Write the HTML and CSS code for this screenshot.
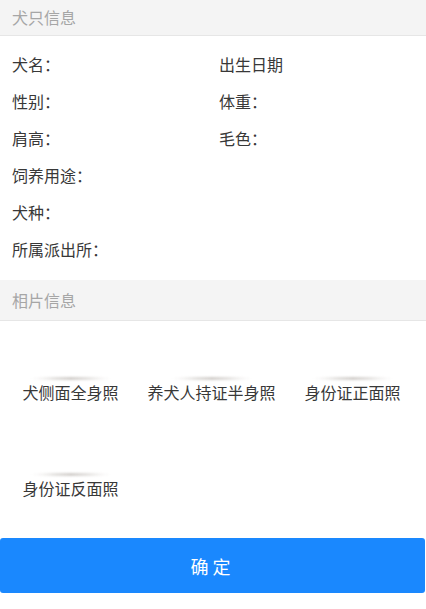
FILE: index.html
```html
<!DOCTYPE html>
<html lang="zh-CN">
<head>
<meta charset="utf-8">
<title>犬只信息</title>
<link rel="stylesheet" href="styles.css">
</head>
<body>
<div class="page">
  <div class="sec-head sec-head-first">犬只信息</div>
  <div class="info">
    <div class="row"><span class="label">犬名：</span></div>
    <div class="row"><span class="label">出生日期</span></div>
    <div class="row"><span class="label">性别：</span></div>
    <div class="row"><span class="label">体重：</span></div>
    <div class="row"><span class="label">肩高：</span></div>
    <div class="row"><span class="label">毛色：</span></div>
    <div class="row full"><span class="label">饲养用途：</span></div>
    <div class="row full"><span class="label">犬种：</span></div>
    <div class="row full"><span class="label">所属派出所：</span></div>
  </div>
  <div class="sec-head">相片信息</div>
  <div class="photos">
    <div class="photo"><div class="pic"></div><div class="cap">犬侧面全身照</div></div>
    <div class="photo"><div class="pic"></div><div class="cap">养犬人持证半身照</div></div>
    <div class="photo"><div class="pic"></div><div class="cap">身份证正面照</div></div>
    <div class="photo"><div class="pic"></div><div class="cap">身份证反面照</div></div>
  </div>
  <div class="btn-wrap">
    <button class="btn" type="button">确定</button>
  </div>
</div>
</body>
</html>
```

FILE: styles.css
```css
* { box-sizing: border-box; }
html, body { margin: 0; padding: 0; background: #fff; }
body {
  font-family: "Noto Sans CJK SC", "Noto Sans", sans-serif;
  color: #333;
  width: 426px;
}
.page { width: 426px; }
.sec-head {
  height: 41px;
  line-height: 41px;
  padding-left: 12px;
  font-size: 16px;
  color: #a6a6a6;
  background: #f4f4f4;
  border-bottom: 1px solid #e6e6e6;
}
.sec-head-first {
  height: 36px;
  line-height: 35px;
}
.info {
  display: grid;
  grid-template-columns: 207px 1fr;
  padding: 10px 0 12px 12px;
}
.row {
  height: 37px;
  line-height: 37px;
  font-size: 16px;
  color: #383838;
}
.row.full { grid-column: 1 / span 2; }
.label { display: inline-block; white-space: nowrap; }
.photos {
  display: grid;
  grid-template-columns: repeat(3, 1fr);
  row-gap: 13px;
  padding: 0 3px 0 0;
}
.photo {
  display: flex;
  flex-direction: column;
  align-items: center;
}
.pic {
  width: 90px;
  height: 59px;
  position: relative;
}
.pic::after {
  content: "";
  position: absolute;
  left: 4px;
  right: 4px;
  bottom: 0;
  height: 3px;
  border-radius: 50%;
  background: linear-gradient(90deg, rgba(200,200,200,0), rgba(190,185,180,0.7), rgba(200,200,200,0));
  filter: blur(1px);
}
.cap {
  height: 24px;
  line-height: 24px;
  font-size: 16px;
  color: #383838;
  white-space: nowrap;
}
.btn-wrap {
  padding: 38px 1px 0 0;
}
.btn {
  display: block;
  width: 100%;
  height: 55px;
  border: 0;
  border-radius: 3px;
  background: #1a88fe;
  color: #fff;
  font-family: "Noto Sans CJK SC", "Noto Sans", sans-serif;
  font-size: 18px;
  letter-spacing: 4px;
  padding: 0;
}
```
